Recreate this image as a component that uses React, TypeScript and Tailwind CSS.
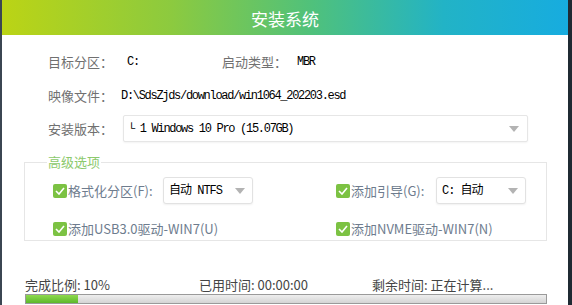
import React from "react";

const cjk = { fontFamily: '"Noto Sans CJK SC", "Noto Sans", sans-serif' };
const mono = { fontFamily: '"Liberation Mono", "DejaVu Sans Mono", "Noto Sans CJK SC", monospace' };

function Arrow() {
  return (
    <svg width="10" height="6" viewBox="0 0 10 6" className="shrink-0">
      <path d="M0 0 L10 0 L5 6 Z" fill="#b3b3b3" />
    </svg>
  );
}

function Check() {
  return (
    <span className="w-[14px] h-[14px] rounded-[2px] bg-[#7cc243] flex items-center justify-center shrink-0">
      <svg width="10" height="8" viewBox="0 0 10 8">
        <path d="M1 4 L4 7 L9 1" stroke="#ffffff" strokeWidth="1.6" fill="none" />
      </svg>
    </span>
  );
}

function Select({ text, w }: { text: string; w: string }) {
  return (
    <div
      className={`${w} h-[27px] border border-[#e2e2e2] rounded-[3px] bg-white shadow-[0_1px_2px_rgba(0,0,0,0.06)] flex items-center justify-between pl-[5px] pr-[7px]`}
    >
      <span className="text-[12px] tracking-[-1px] text-[#000]" style={mono}>
        {text}
      </span>
      <Arrow />
    </div>
  );
}

export default function App() {
  return (
    <div className="w-[572px] h-[305px] flex flex-col bg-white border-l-[2px] border-l-[#3b4652] border-r-[4px] border-r-[#1f2a33] overflow-hidden">
      <div className="h-[35px] shrink-0 flex items-center justify-center bg-[linear-gradient(90deg,#bbd415_0%,#8cca3f_30%,#4fc17c_55%,#22b3c6_78%,#17acdf_100%)]">
        <span className="text-[17px] text-white leading-none mt-[2px]" style={cjk}>
          安装系统
        </span>
      </div>

      <div className="flex flex-col">
        <div className="ml-[46px] mt-[17px] h-[20px] flex items-center">
          <span className="w-[75px] text-[13px] text-[#707070]" style={cjk}>目标分区：</span>
          <span className="w-[99px] text-[12px] tracking-[-1.3px] text-[#000] pl-[4px]" style={mono}>C:</span>
          <span className="w-[75px] text-[13px] text-[#707070]" style={cjk}>启动类型：</span>
          <span className="text-[12px] tracking-[-1.3px] text-[#000]" style={mono}>MBR</span>
        </div>

        <div className="ml-[46px] mt-[14px] h-[20px] flex items-center">
          <span className="w-[73px] text-[13px] text-[#707070]" style={cjk}>映像文件：</span>
          <span className="text-[12px] tracking-[-1.3px] text-[#000]" style={mono}>
            D:\SdsZjds/download/win1064_202203.esd
          </span>
        </div>

        <div className="ml-[46px] mt-[9px] flex items-center">
          <span className="w-[75px] text-[13px] text-[#707070]" style={cjk}>安装版本：</span>
          <div className="w-[405px] h-[27px] border border-[#e6e6e6] rounded-[2px] bg-white shadow-[0_1px_2px_rgba(0,0,0,0.05)] flex items-center justify-between pl-[4px] pr-[8px]">
            <span className="text-[12px] tracking-[-1.3px] text-[#000]" style={mono}>
              └ 1 Windows 10 Pro (15.07GB)
            </span>
            <Arrow />
          </div>
        </div>

        <fieldset className="ml-[22px] w-[523px] mt-[12px] border border-[#e6e6e6] px-0 pt-[7px] pb-[3px]">
          <legend className="ml-[22px] px-[1px] text-[13px] leading-[16px] text-[#8cc96c]" style={cjk}>
            高级选项
          </legend>
          <div className="flex items-center">
            <div className="w-[311px] pl-[28px] flex items-center">
              <Check />
              <span className="ml-[1px] w-[95px] text-[13px] text-[#6e7c8e]" style={cjk}>格式化分区(F):</span>
              <Select text="自动 NTFS" w="w-[90px]" />
            </div>
            <div className="flex items-center">
              <Check />
              <span className="ml-[1px] w-[85px] text-[13px] text-[#6e7c8e]" style={cjk}>添加引导(G):</span>
              <Select text="C: 自动" w="w-[90px]" />
            </div>
          </div>
          <div className="mt-[17px] h-[16px] flex items-center">
            <div className="w-[311px] pl-[28px] flex items-center">
              <Check />
              <span className="ml-[1px] text-[13px] text-[#6e7c8e]" style={cjk}>添加USB3.0驱动-WIN7(U)</span>
            </div>
            <div className="flex items-center">
              <Check />
              <span className="ml-[1px] text-[13px] text-[#6e7c8e]" style={cjk}>添加NVME驱动-WIN7(N)</span>
            </div>
          </div>
        </fieldset>

        <div className="ml-[23px] mt-[36px] h-[16px] flex items-center text-[13px] text-[#444]" style={cjk}>
          <span className="w-[174px]">完成比例: 10%</span>
          <span className="w-[173px]">已用时间: 00:00:00</span>
          <span>剩余时间: 正在计算...</span>
        </div>
        <div className="ml-[23px] mt-[1px] w-[522px] h-[10px] border border-[#9a9a9a] bg-[linear-gradient(180deg,#eeeeee,#d4d4d4)] flex">
          <div className="w-[52px] h-full bg-[linear-gradient(180deg,#8fd94e,#5cb82b)]" />
        </div>
      </div>
    </div>
  );
}
